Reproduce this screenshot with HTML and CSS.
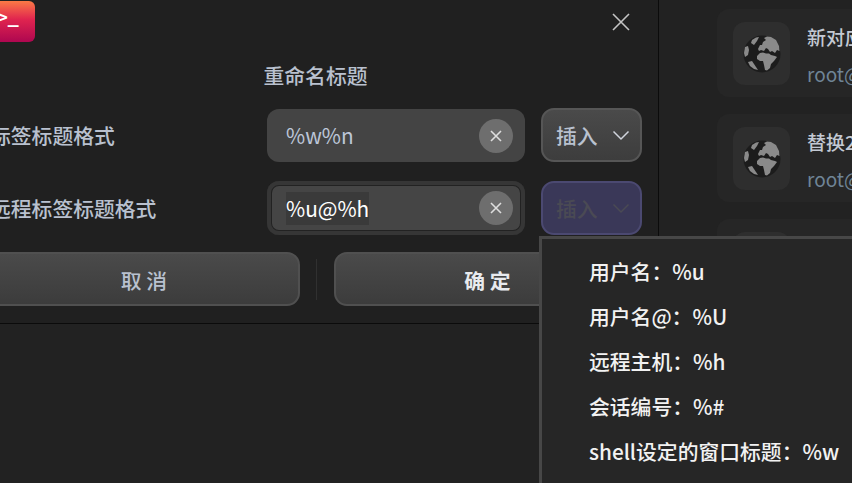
FILE: index.html
```html
<!DOCTYPE html>
<html>
<head>
    <title>重命名标题</title>
    <link rel="stylesheet" href="styles.css">
</head>
<body>
    <div class="desktop">
        <div class="dialog">
            <div class="dialog-header">
                <div class="app-icon"><span>&gt;_</span></div>
                <svg class="close-icon" width="20" height="20" viewBox="0 0 20 20"><path d="M2 2 L18 18 M18 2 L2 18"/></svg>
            </div>
            <h2>重命名标题</h2>
            <div class="form-row">
                <label>标签标题格式</label>
                <div class="input">
                    <span class="input-text">%w%n</span>
                    <span class="clear"><svg width="12" height="12" viewBox="0 0 12 12"><path d="M1 1 L11 11 M11 1 L1 11"/></svg></span>
                </div>
                <button class="insert">插入<svg width="18" height="11" viewBox="0 0 18 11"><path d="M1.5 1.5 L9 9 L16.5 1.5"/></svg></button>
            </div>
            <div class="form-row">
                <label>远程标签标题格式</label>
                <div class="input focused">
                    <span class="input-text selected">%u@%h</span>
                    <span class="clear"><svg width="12" height="12" viewBox="0 0 12 12"><path d="M1 1 L11 11 M11 1 L1 11"/></svg></span>
                </div>
                <button class="insert active">插入<svg width="18" height="11" viewBox="0 0 18 11"><path d="M1.5 1.5 L9 9 L16.5 1.5"/></svg></button>
            </div>
            <div class="dialog-footer">
                <button class="action">取 消</button>
                <div class="divider"></div>
                <button class="action primary">确 定</button>
            </div>
        </div>
        <div class="sessions">
            <div class="card">
                <div class="card-icon">
                    <svg width="38" height="38" viewBox="0 0 38 38"><use href="#globe"/></svg>
                </div>
                <div class="card-text">
                    <div class="card-title">新对应服务器</div>
                    <div class="card-sub">root@192.168.1.1</div>
                </div>
            </div>
            <div class="card">
                <div class="card-icon">
                    <svg width="38" height="38" viewBox="0 0 38 38"><use href="#globe"/></svg>
                </div>
                <div class="card-text">
                    <div class="card-title">替换2服务器</div>
                    <div class="card-sub">root@192.168.1.2</div>
                </div>
            </div>
            <div class="card">
                <div class="card-icon"></div>
            </div>
        </div>
    </div>

    <div class="menu">
        <div class="menu-item">用户名：%u</div>
        <div class="menu-item">用户名@：%U</div>
        <div class="menu-item">远程主机：%h</div>
        <div class="menu-item">会话编号：%#</div>
        <div class="menu-item">shell设定的窗口标题：%w</div>
    </div>

    <svg class="defs" width="0" height="0">
        <symbol id="globe" viewBox="0 0 38 38">
            <circle cx="19" cy="19" r="18.5" fill="#1c1c1c"/>
            <g fill="#8a8a8a">
                <path d="M14 21 L17 18 L20 17.5 L23 18.5 L26 18.5 L28 20 L32 21 L34 22 L31 26 L28 29 L27 33 L24 35.5 L22 35 L21 30 L20 26 L17 26 L14 24 Z"/>
                <path d="M15 14 L17 10 L19 10 L20 7 L23 5 L21 3 L24 1.5 L28 2 L33 5 L36 11 L36.5 16 L34 15 L32 18 L29 16 L27 17 L25 14 L23 13 L21 16 L18 15 L16 16 Z"/>
                <path d="M9 5 L13 2.5 L16 2 L14 6 L11 10 L8 8 Z"/>
                <path d="M2 12 L5 11 L6 15 L5 20 L2 22 L1 18 Z"/>
                <path d="M5 27 L9 26 L13 32 L15 35 L11 34 L7 31 Z"/>
            </g>
        </symbol>
    </svg>
</body>
</html>
```

FILE: styles.css
```css
:root {
    --background: #202020;
    --label: #b9c1cf;
    --line: #0b0b0b;
}

* {
    box-sizing: border-box;
}

html, body {
    margin: 0;
    height: 100%;
}

body {
    position: relative;
    width: 852px;
    height: 483px;
    overflow: hidden;
    background: #222222;
    font-family: "Noto Sans CJK SC", "Noto Sans", sans-serif;
    font-size: 20.8px;
}

.desktop {
    display: flex;
    align-items: flex-start;
    height: 100%;
}

.dialog {
    flex: none;
    width: 685px;
    height: 324px;
    margin-left: -26px;
    padding: 1px 16px 0 14px;
    background: var(--background);
    border-right: 1px solid var(--line);
    border-bottom: 1px solid var(--line);
    color: var(--label);
}

.dialog-header {
    display: flex;
    justify-content: space-between;
    align-items: flex-start;
    height: 41px;
    padding-right: 11px;
}

.app-icon {
    width: 41px;
    height: 41px;
    margin-left: 6px;
    padding: 0 0 0 3px;
    border-radius: 6px;
    background: linear-gradient(#fb7a46, #e0244f 45%, #ae0750);
    color: white;
    font-family: "DejaVu Sans Mono", monospace;
    font-size: 18px;
    font-weight: 700;
    line-height: 32px;
}

.close-icon {
    margin-top: 11px;
}

.close-icon path {
    fill: none;
    stroke: #c4c4c4;
    stroke-width: 1.6;
}

h2 {
    margin: 19px 0 19px;
    padding-left: 1px;
    font-size: 20.8px;
    font-weight: 500;
    line-height: 28px;
    text-align: center;
}

.form-row {
    display: grid;
    grid-template-columns: 279px 258px 117px;
    align-items: center;
    height: 54px;
    margin-bottom: 19px;
}

.form-row label {
    padding-left: 2px;
    font-weight: 500;
    line-height: 28px;
}

.input {
    display: flex;
    justify-content: space-between;
    align-items: center;
    height: 53px;
    margin-top: 1px;
    padding: 0 12px 0 19px;
    border-radius: 12px;
    background: #444444;
}

.input.focused {
    height: 54px;
    margin-top: 0;
    background: #454545;
    box-shadow: inset 0 0 0 4px #363636, inset 0 0 0 5px #222222;
}

.input-text {
    color: #bcc6d8;
    line-height: 33px;
}

.input-text.selected {
    background: #3a3a3a;
    color: white;
}

.clear {
    display: flex;
    justify-content: center;
    align-items: center;
    width: 34px;
    height: 34px;
    border-radius: 50%;
    background: #6e6e6e;
}

.clear path {
    fill: none;
    stroke: #dddddd;
    stroke-width: 1.6;
}

button {
    font: inherit;
    cursor: pointer;
}

.insert {
    display: flex;
    align-items: center;
    justify-content: space-between;
    height: 54px;
    margin-left: 16px;
    width: 101px;
    padding: 0 10px 0 13px;
    border: 2px solid #565656;
    border-radius: 13px;
    background: linear-gradient(#4a4a4a, #3d3d3d);
    color: var(--label);
    font-weight: 500;
}

.insert path {
    fill: none;
    stroke: #d0d4dc;
    stroke-width: 1.5;
}

.insert.active {
    border-color: #4b4971;
    background: #3a3858;
    color: #4a4a54;
}

.insert.active path {
    stroke: #4a4a54;
}

.dialog-footer {
    display: flex;
    align-items: center;
    height: 54px;
    margin-top: -2px;
}

.action {
    width: 312px;
    height: 54px;
    padding-top: 2px;
    border: 2px solid #505050;
    border-radius: 13px;
    background: linear-gradient(#4a4a4a, #3c3c3c);
    color: var(--label);
    font-weight: 500;
}

.action.primary {
    width: 307px;
    color: #e8eaee;
    font-weight: 700;
}

.divider {
    width: 1px;
    height: 41px;
    margin: 0 17px 0 16px;
    background: #303030;
}

.sessions {
    flex: 1;
    min-width: 0;
    overflow: hidden;
    height: 100%;
    padding: 9px 0 0 58px;
}

.card {
    display: flex;
    gap: 17px;
    width: 300px;
    height: 88px;
    margin-bottom: 17px;
    padding: 13px 16px;
    border-radius: 12px;
    background: #262626;
}

.card-icon {
    display: flex;
    flex: none;
    justify-content: center;
    align-items: center;
    width: 57px;
    height: 63px;
    border-radius: 12px;
    background: #2e2e2e;
}

.card-text {
    white-space: nowrap;
}

.card-title {
    color: #c3c9d3;
    font-size: 19px;
    font-weight: 500;
    line-height: 30px;
}

.card-sub {
    margin-top: 7px;
    color: #6f8496;
    font-size: 19px;
    line-height: 30px;
}

.menu {
    position: absolute;
    top: 236px;
    left: 539px;
    right: -4px;
    bottom: -4px;
    padding: 10px 0 0 47px;
    border: 3px solid #474747;
    background: #262626;
    color: #f2f2f2;
    font-weight: 500;
}

.menu-item {
    height: 45px;
    line-height: 45px;
    white-space: nowrap;
}

.defs {
    position: absolute;
}
```
